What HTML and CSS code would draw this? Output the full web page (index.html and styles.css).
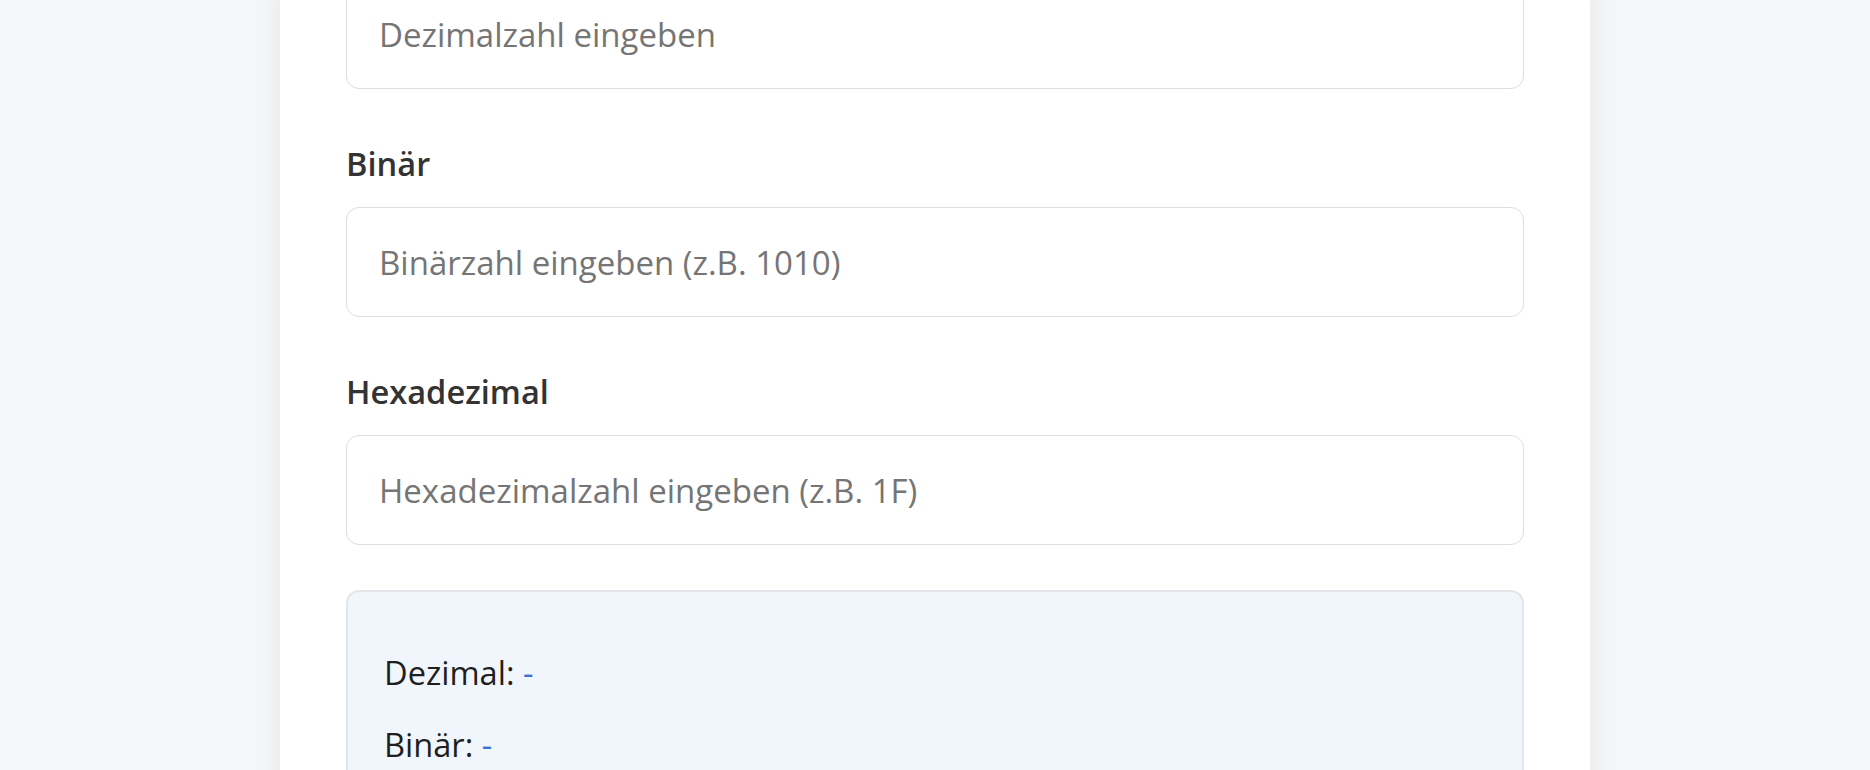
FILE: index.html
```html
<!DOCTYPE html>
<html lang="de">
<head>
<meta charset="utf-8">
<title>Zahlensystem-Umrechner</title>
<link rel="stylesheet" href="styles.css">
</head>
<body>
<main class="card">
  <div class="field field-first">
    <input class="num-input" type="text" placeholder="Dezimalzahl eingeben">
  </div>
  <div class="field">
    <label class="field-label">Binär</label>
    <input class="num-input" type="text" placeholder="Binärzahl eingeben (z.B. 1010)">
  </div>
  <div class="field">
    <label class="field-label">Hexadezimal</label>
    <input class="num-input" type="text" placeholder="Hexadezimalzahl eingeben (z.B. 1F)">
  </div>
  <section class="result">
    <p class="result-line">Dezimal: <span class="result-value">-</span></p>
    <p class="result-line">Binär: <span class="result-value">-</span></p>
  </section>
</main>
</body>
</html>
```
FILE: styles.css
```css
html, body {
  margin: 0;
  padding: 0;
  height: 100%;
  overflow: hidden;
}
body {
  background: #f4f6f8;
  font-family: "Open Sans", "Noto Sans", sans-serif;
  color: #333;
}
.card {
  width: 1310px;
  margin: -21px auto 0;
  box-sizing: border-box;
  padding: 0 66px 60px;
  background: #ffffff;
  box-shadow: 0 4px 24px rgba(0, 0, 0, 0.07);
  display: flex;
  flex-direction: column;
}
.field {
  display: flex;
  flex-direction: column;
  margin-bottom: 55px;
}
.field-label {
  font-size: 32.6px;
  font-weight: 600;
  line-height: 40px;
  color: #333;
  margin-bottom: 23px;
}
.num-input {
  box-sizing: border-box;
  height: 110px;
  width: 100%;
  padding: 0 32px;
  border: 1.5px solid #dedede;
  border-radius: 13px;
  font-family: "Open Sans", "Noto Sans", sans-serif;
  font-size: 33px;
  color: #333;
  background: #fff;
  outline: none;
}
.num-input::placeholder {
  color: #757575;
}
.field:last-of-type {
  margin-bottom: 45px;
}
.result {
  box-sizing: border-box;
  border: 2px solid #e2e6ea;
  border-radius: 13px;
  background: #f1f6fc;
  padding: 57px 36px 60px;
}
.result-line {
  margin: 0 0 24px;
  font-size: 32.6px;
  line-height: 48px;
  color: #1f1f1f;
}
.result-value {
  color: #3a73cc;
}
```
